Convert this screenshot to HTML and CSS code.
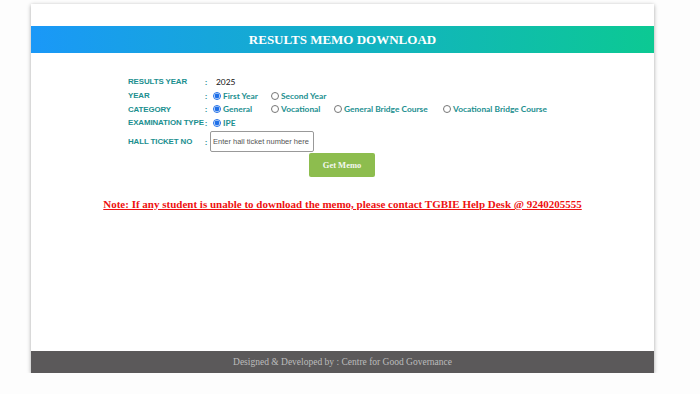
FILE: index.html
```html
<!DOCTYPE html>
<html>
<head>
<meta charset="utf-8">
<link rel="stylesheet" href="styles.css">
</head>
<body>
<div class="page">
  <div class="topgap"></div>
  <div class="header">RESULTS MEMO DOWNLOAD</div>
  <div class="main">
    <div class="form">
      <div class="row">
        <span class="label">RESULTS YEAR</span><span class="colon">:</span>
        <span class="value plain">2025</span>
      </div>
      <div class="row">
        <span class="label">YEAR</span><span class="colon">:</span>
        <span class="value">
          <label class="opt w-first"><input type="radio" name="yr" checked>First Year</label>
          <label class="opt"><input type="radio" name="yr">Second Year</label>
        </span>
      </div>
      <div class="row">
        <span class="label">CATEGORY</span><span class="colon">:</span>
        <span class="value">
          <label class="opt w-gen"><input type="radio" name="cat" checked>General</label>
          <label class="opt w-voc"><input type="radio" name="cat">Vocational</label>
          <label class="opt w-gbc"><input type="radio" name="cat">General Bridge Course</label>
          <label class="opt"><input type="radio" name="cat">Vocational Bridge Course</label>
        </span>
      </div>
      <div class="row">
        <span class="label">EXAMINATION TYPE</span><span class="colon">:</span>
        <span class="value">
          <label class="opt"><input type="radio" name="exam" checked>IPE</label>
        </span>
      </div>
      <div class="row ticket">
        <span class="label">HALL TICKET NO</span><span class="colon">:</span>
        <span class="value"><input class="field" type="text" placeholder="Enter hall ticket number here"></span>
      </div>
      <div class="btnrow"><button class="btn">Get Memo</button></div>
    </div>
    <p class="note">Note: If any student is unable to download the memo, please contact TGBIE Help Desk @ 9240205555</p>
  </div>
  <div class="footer">Designed &amp; Developed by : Centre for Good Governance</div>
</div>
</body>
</html>
```
FILE: styles.css
```css
html, body {
  margin: 0;
  padding: 0;
  background: #fdfdfd;
}
.page {
  width: 623px;
  height: 369px;
  margin: 4px 0 0 31px;
  background: #fff;
  box-shadow: 0 1px 4px rgba(0,0,0,0.35);
  display: flex;
  flex-direction: column;
}
.topgap {
  height: 22px;
}
.header {
  height: 27px;
  background: linear-gradient(to right, #1a98f8, #0cc993);
  color: #fff;
  font-family: "Liberation Serif", serif;
  font-weight: bold;
  font-size: 13px;
  display: flex;
  align-items: center;
  justify-content: center;
}
.main {
  flex: 1;
}
.form {
  padding: 22px 0 0 97px;
  font-family: Lato, "Liberation Sans", sans-serif;
  font-weight: bold;
  font-size: 8.4px;
  color: #1b8f8f;
}
.row {
  display: flex;
  align-items: center;
  height: 13.7px;
}
.label {
  width: 77px;
  white-space: nowrap;
  font-family: "Liberation Sans", Arial, sans-serif;
  font-size: 7.9px;
  letter-spacing: -0.1px;
}
.colon {
  width: 8px;
}
.value {
  display: flex;
  align-items: center;
}
.value.plain {
  color: #111;
  font-weight: normal;
  padding-left: 3px;
}
.opt {
  display: flex;
  align-items: center;
  white-space: nowrap;
}
.opt input {
  width: 8px;
  height: 8px;
  margin: 0 2px 0 0;
  accent-color: #1e6fe8;
}
.w-first { width: 58px; }
.w-gen { width: 58px; }
.w-voc { width: 63px; }
.w-gbc { width: 109px; }
.row.ticket {
  height: 22px;
  margin-top: 1px;
}
.field {
  box-sizing: border-box;
  width: 104px;
  height: 21px;
  margin-left: -3px;
  border: 1px solid #999;
  border-radius: 2px;
  padding: 0 1px 0 2px;
  font-family: "Liberation Sans", sans-serif;
  font-size: 7.5px;
}
.field::placeholder {
  color: #555;
}
.btnrow {
  padding: 0 0 0 181px;
}
.btn {
  width: 66px;
  height: 24px;
  border: none;
  border-radius: 2px;
  background: #8dbd4e;
  color: #f4f8ee;
  font-family: "Liberation Serif", serif;
  font-weight: bold;
  font-size: 8.5px;
}
.note {
  margin: 21px 0 0;
  text-align: center;
  font-family: "Liberation Serif", serif;
  font-weight: bold;
  font-size: 11px;
  color: #ee1111;
  text-decoration: underline;
}
.footer {
  height: 22px;
  background: #5b595a;
  color: #bcbcbc;
  font-family: "Liberation Serif", serif;
  font-size: 9.5px;
  display: flex;
  align-items: center;
  justify-content: center;
}
```
